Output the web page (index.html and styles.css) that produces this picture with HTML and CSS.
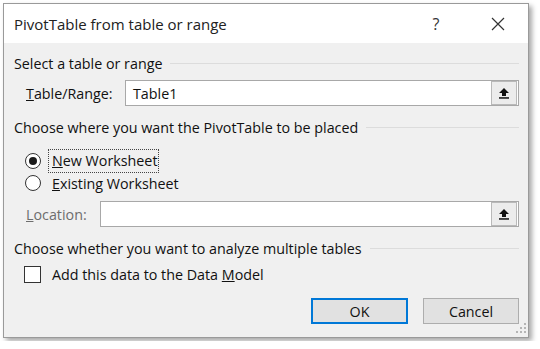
FILE: index.html
```html
<!DOCTYPE html>
<html lang="en">
<head>
    <meta charset="UTF-8">
    <title>PivotTable from table or range</title>
    <link rel="stylesheet" href="styles.css">
</head>
<body>
    <div class="dialog">
        <div class="titlebar">
            <span class="title">PivotTable from table or range</span>
            <span class="help">?</span>
            <span class="close">
                <svg width="14" height="14" viewBox="0 0 14 14"><path d="M1 1 L13 13 M13 1 L1 13" stroke="#333" stroke-width="1.2" fill="none"/></svg>
            </span>
        </div>

        <div class="body">
            <div class="group-head"><span>Select a table or range</span><div class="rule"></div></div>
            <div class="field-row">
                <label class="field-label wide"><u>T</u>able/Range:</label>
                <div class="ref-input">
                    <span class="ref-text">Table1</span>
                    <span class="ref-btn">
                        <svg width="12" height="12" viewBox="0 0 12 12"><path d="M6 1 L11 6 L8 6 L8 9 L4 9 L4 6 L1 6 Z" fill="#111"/><rect x="1" y="10.2" width="10" height="1.5" fill="#111"/></svg>
                    </span>
                </div>
            </div>

            <div class="group-head second"><span>Choose where you want the PivotTable to be placed</span><div class="rule"></div></div>
            <div class="option-row first">
                <span class="radio checked"></span>
                <span class="focus"><u>N</u>ew Worksheet</span>
            </div>
            <div class="option-row">
                <span class="radio"></span>
                <span class="plain"><u>E</u>xisting Worksheet</span>
            </div>
            <div class="field-row">
                <label class="field-label narrow muted"><u>L</u>ocation:</label>
                <div class="ref-input">
                    <span class="ref-text"></span>
                    <span class="ref-btn">
                        <svg width="12" height="12" viewBox="0 0 12 12"><path d="M6 1 L11 6 L8 6 L8 9 L4 9 L4 6 L1 6 Z" fill="#111"/><rect x="1" y="10.2" width="10" height="1.5" fill="#111"/></svg>
                    </span>
                </div>
            </div>

            <div class="group-head"><span>Choose whether you want to analyze multiple tables</span><div class="rule"></div></div>
            <div class="option-row check-row">
                <span class="checkbox"></span>
                <span class="plain">Add this data to the Data <u>M</u>odel</span>
            </div>

            <div class="buttons">
                <button class="btn default">OK</button>
                <button class="btn">Cancel</button>
            </div>
            <span class="grip">
                <svg width="10" height="10" viewBox="0 0 10 10" fill="#b5b5b5"><rect x="8" y="0" width="2" height="2"/><rect x="4" y="4" width="2" height="2"/><rect x="8" y="4" width="2" height="2"/><rect x="0" y="8" width="2" height="2"/><rect x="4" y="8" width="2" height="2"/><rect x="8" y="8" width="2" height="2"/></svg>
            </span>
        </div>
    </div>
</body>
</html>
```

FILE: styles.css
```css
body {
    margin: 0;
    padding: 3px;
    background: #ffffff;
    font-family: "Open Sans", "Noto Sans", Arial, sans-serif;
    font-size: 14.3px;
    color: #111;
}
.dialog {
    width: 524px;
    height: 333px;
    border: 1px solid #9a9a9a;
    background: #f0f0f0;
    box-shadow: 3px 3px 5px rgba(0,0,0,0.35);
}
.titlebar {
    height: 39px;
    background: #ffffff;
    display: flex;
    align-items: center;
    padding-left: 10px;
}
.title {
    flex: 1;
    font-size: 15px;
    color: #222;
}
.help {
    width: 14px;
    text-align: center;
    font-size: 16px;
    color: #333;
    margin-right: 48px;
}
.close {
    width: 14px;
    height: 14px;
    margin-right: 23px;
}
.close svg { display: block; }
.body {
    position: relative;
    padding: 10px 9px 0 10px;
}
.group-head {
    height: 20px;
    margin-top: 11px;
    display: flex;
    align-items: center;
    gap: 8px;
}
.group-head:first-child { margin-top: 0; }
.group-head .rule {
    flex: 1;
    height: 1px;
    background: #dcdcdc;
}
.field-row {
    display: flex;
    align-items: center;
    margin-top: 7px;
    padding-left: 12px;
}
.field-label { flex: none; }
.field-label.wide { width: 99px; }
.field-label.narrow { width: 74px; }
.muted { color: #6d6d6d; }
.ref-input {
    flex: 1;
    height: 24px;
    border: 1px solid #a8a8a8;
    background: #ffffff;
    display: flex;
    align-items: center;
}
.ref-text {
    flex: 1;
    padding-left: 7px;
}
.ref-btn {
    width: 24px;
    height: 22px;
    margin-right: 1px;
    border: 1px solid #b9b9b9;
    background: #ececec;
    display: flex;
    align-items: center;
    justify-content: center;
}
.option-row {
    height: 22px;
    display: flex;
    align-items: center;
    padding-left: 11px;
}
.option-row.first { margin-top: 13px; }
.radio {
    width: 14px;
    height: 14px;
    border: 1px solid #333;
    border-radius: 50%;
    background: #fff;
    display: flex;
    align-items: center;
    justify-content: center;
    margin-right: 7px;
}
.radio.checked::after {
    content: "";
    width: 8px;
    height: 8px;
    border-radius: 50%;
    background: #1a1a1a;
}
.focus {
    border: 1px dotted #444;
    padding: 0 1px 1px 3px;
    line-height: 21px;
}
.plain { margin-left: 4px; }
.check-row {
    margin-top: 5px;
    padding-left: 10px;
}
.checkbox {
    width: 15px;
    height: 15px;
    border: 1px solid #333;
    background: #fff;
    margin-right: 7px;
}
.buttons {
    display: flex;
    justify-content: flex-end;
    gap: 15px;
    margin-top: 13px;
}
.btn {
    width: 96px;
    height: 26px;
    font-family: inherit;
    font-size: 14.3px;
    color: #111;
    background: #e1e1e1;
    border: 1px solid #adadad;
    padding: 0;
}
.btn.default {
    width: 97px;
    border: 2px solid #0078d7;
}
.grip {
    position: absolute;
    right: 2px;
    bottom: -9px;
}
.grip svg { display: block; }
```
